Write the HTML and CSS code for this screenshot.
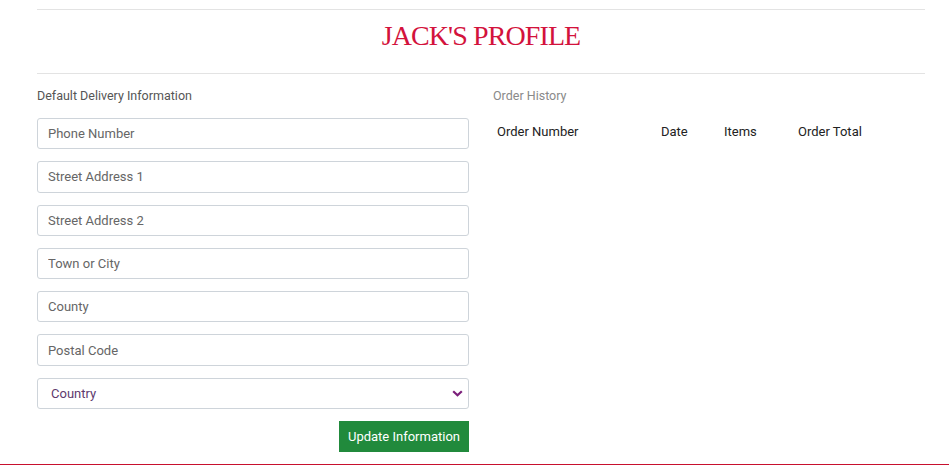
FILE: index.html
```html
<!DOCTYPE html>
<html lang="en">
<head>
<meta charset="utf-8">
<title>Jack's Profile</title>
<link rel="stylesheet" href="styles.css">
</head>
<body>
<div class="container">
  <header class="page-header">
    <h1 class="title">JACK'S PROFILE</h1>
  </header>
  <div class="row">
    <section class="col">
      <p class="section-label">Default Delivery Information</p>
      <form class="form">
        <input class="field" type="text" placeholder="Phone Number">
        <input class="field" type="text" placeholder="Street Address 1">
        <input class="field" type="text" placeholder="Street Address 2">
        <input class="field" type="text" placeholder="Town or City">
        <input class="field" type="text" placeholder="County">
        <input class="field" type="text" placeholder="Postal Code">
        <div class="select-wrap">
          <select class="field select">
            <option>Country</option>
          </select>
          <svg class="chevron" width="11" height="7" viewBox="0 0 11 7"><path d="M1.2 1.2 L5.5 5.3 L9.8 1.2" fill="none" stroke="#7b1f7a" stroke-width="2.2"/></svg>
        </div>
        <div class="actions">
          <button class="btn" type="button">Update Information</button>
        </div>
      </form>
    </section>
    <section class="col">
      <p class="section-label muted">Order History</p>
      <table class="orders">
        <thead>
          <tr>
            <th class="c-num">Order Number</th>
            <th class="c-date">Date</th>
            <th class="c-items">Items</th>
            <th class="c-total">Order Total</th>
          </tr>
        </thead>
      </table>
    </section>
  </div>
</div>
<footer class="footer"></footer>
</body>
</html>
```

FILE: styles.css
```css
html, body {
  margin: 0;
  padding: 0;
  background: #fff;
}
body {
  font-family: Roboto, "Liberation Sans", sans-serif;
  font-size: 13px;
  color: #333;
}
.container {
  width: 888px;
  margin-left: 37px;
  padding-top: 9px;
}
.page-header {
  border-top: 1px solid #e3e3e3;
  border-bottom: 1px solid #e3e3e3;
  height: 63px;
  display: flex;
  justify-content: center;
}
.title {
  margin: 11px 0 0;
  font-family: "Liberation Serif", "DejaVu Serif", serif;
  font-weight: normal;
  font-size: 28px;
  line-height: 30px;
  color: #d3123c;
  letter-spacing: -0.9px;
}
.row {
  display: grid;
  grid-template-columns: 432px 432px;
  column-gap: 24px;
}
.section-label {
  margin: 14px 0 14px;
  line-height: 16px;
  color: #555;
  font-size: 12.5px;
}
.section-label.muted {
  color: #8a8a8a;
}
.form {
  display: flex;
  flex-direction: column;
  gap: 12px;
}
.field {
  box-sizing: border-box;
  width: 432px;
  height: 31.3px;
  margin: 0;
  border: 1px solid #ced4da;
  border-radius: 3px;
  padding: 0 10px;
  font-family: Roboto, "Liberation Sans", sans-serif;
  font-size: 13px;
  color: #666;
  background: #fff;
  outline: none;
}
.field::placeholder {
  color: #666;
  opacity: 1;
}
.select-wrap {
  position: relative;
  height: 31.3px;
}
.select {
  appearance: none;
  -webkit-appearance: none;
  padding-left: 13px;
  color: #5e3a6e;
}
.chevron {
  position: absolute;
  right: 6px;
  top: 12px;
}
.actions {
  display: flex;
  justify-content: flex-end;
}
.btn {
  width: 130px;
  height: 31.3px;
  border: 0;
  border-radius: 0;
  background: #218a3c;
  color: #fff;
  font-family: Roboto, "Liberation Sans", sans-serif;
  font-size: 13px;
  padding: 0;
}
.orders {
  border-collapse: collapse;
  margin-top: 0;
}
.orders th {
  font-weight: normal;
  text-align: left;
  color: #222;
  font-size: 13px;
  padding: 6px 4px;
  line-height: 16px;
}
.orders .c-num { width: 156px; }
.orders .c-date { width: 55px; }
.orders .c-items { width: 66px; }
.footer {
  margin-top: 11.6px;
  border-top: 1px solid #c8102e;
}
```
